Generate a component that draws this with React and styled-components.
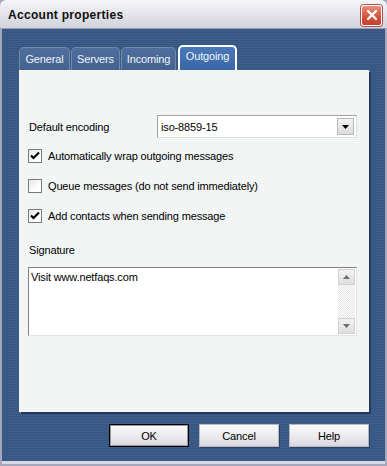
import React from "react";
import styled, { createGlobalStyle } from "styled-components";

const Global = createGlobalStyle`
  html, body { margin: 0; padding: 0; background: #3a5a8a; }
  * { box-sizing: border-box; }
`;

const font = `"Liberation Sans", Arial, sans-serif`;

const Window = styled.div`
  width: 387px;
  height: 466px;
  display: flex;
  flex-direction: column;
  font-family: ${font};
  font-size: 11px;
  letter-spacing: -0.15px;
  color: #000;
  border-left: 2px solid #a6a6bc;
  border-right: 2px solid #a6a6bc;
  border-bottom: 2px solid #a6a6bc;
  background: #a6a6bc;
`;

const TitleBar = styled.div`
  height: 29px;
  flex: none;
  display: flex;
  align-items: center;
  justify-content: space-between;
  padding: 2px 5px 0 8px;
  background: linear-gradient(#f6f6f8 0%, #e6e6ec 45%, #d2d2da 100%);
  border-bottom: 1px solid #9a9aac;
  margin: 0 -2px;
  border-radius: 6px 6px 0 0;
`;

const Title = styled.span`
  font-weight: bold;
  font-size: 12px;
  color: #101010;
  letter-spacing: 0.3px;
`;

const Close = styled.div`
  width: 21px;
  height: 21px;
  border-radius: 3px;
  border: 1px solid #fff;
  box-shadow: 0 0 0 1px #b05050;
  background: linear-gradient(#e8907a, #d0503a 60%, #c84030);
  display: flex;
  align-items: center;
  justify-content: center;
`;

const Body = styled.div`
  flex: 1;
  display: flex;
  flex-direction: column;
  padding: 16px 16px 0 17px;
  background: repeating-linear-gradient(
    #3d5d8d 0px, #3d5d8d 1px, #36557f 1px, #36557f 2px
  );
  border-bottom: 3px solid #d8d8e4;
`;

const Tabs = styled.div`
  display: flex;
  align-items: flex-end;
  gap: 1px;
  height: 25px;
`;

const Tab = styled.div`
  width: ${(p) => p.$w}px;
  height: ${(p) => (p.$active ? "25px" : "23px")};
  padding-top: ${(p) => (p.$active ? "3px" : "5px")};
  margin-left: ${(p) => (p.$active ? "1px" : "0")};
  text-align: center;
  border-radius: 5px 5px 0 0;
  color: #f0f4fa;
  font-size: 11px;
  background: ${(p) =>
    p.$active ? "linear-gradient(#4a78b8, #3a66a4)" : "linear-gradient(#4f6e9c, #43628f)"};
  border: ${(p) => (p.$active ? "2px solid #fafcff" : "1px solid #7088ac")};
  border-bottom: none;
`;

const Panel = styled.div`
  width: 350px;
  height: 342px;
  display: flex;
  flex-direction: column;
  padding: 45px 11px 0 9px;
  background: repeating-linear-gradient(
    #f6f8f8 0px, #f6f8f8 1px, #eff2f2 1px, #eff2f2 2px
  );
  box-shadow: 2px 2px 0 #25395a, 1px 1px 0 #a8b0b8;
`;

const Row = styled.div`
  display: flex;
  align-items: center;
  height: 23px;
`;

const Label = styled.span`
  width: 129px;
  padding-left: 1px;
`;

const Select = styled.div`
  width: 200px;
  height: 23px;
  display: flex;
  align-items: center;
  justify-content: space-between;
  background: #fff;
  border: 1px solid #a0a0a0;
  border-right-color: #e0e0e0;
  border-bottom-color: #e0e0e0;
  padding: 2px 2px 2px 3px;
`;

const DropButton = styled.div`
  width: 17px;
  height: 17px;
  background: linear-gradient(#f4f4f4, #dcdcdc);
  border: 1px solid #b8b8b8;
  display: flex;
  align-items: center;
  justify-content: center;
`;

const CheckRow = styled.label`
  display: flex;
  align-items: center;
  gap: 6px;
  height: 14px;
  margin-top: ${(p) => p.$mt}px;
`;

const Box = styled.span`
  width: 14px;
  height: 14px;
  flex: none;
  background: linear-gradient(135deg, #e6e6e6, #ffffff 70%);
  border: 1px solid #7a7a7a;
  display: flex;
  align-items: center;
  justify-content: center;
`;

const SigLabel = styled.div`
  margin-top: 21px;
  padding-left: 1px;
`;

const TextArea = styled.div`
  margin-top: 11px;
  width: 329px;
  height: 69px;
  display: flex;
  background: #fff;
  border: 1px solid #808080;
  border-right-color: #e4e4e4;
  border-bottom-color: #e4e4e4;
  padding: 1px;
`;

const TextContent = styled.div`
  flex: 1;
  padding: 2px 1px;
  line-height: 13px;
`;

const Scroll = styled.div`
  width: 17px;
  display: flex;
  flex-direction: column;
  justify-content: space-between;
  background-color: #f2f2f2;
  background-image: repeating-conic-gradient(#e8e8e8 0% 25%, #fbfbfb 0% 50%);
  background-size: 2px 2px;
`;

const ScrollBtn = styled.div`
  height: 16px;
  background: linear-gradient(#f2f2f2, #dedede);
  border: 1px solid #d0d0d0;
  display: flex;
  align-items: center;
  justify-content: center;
`;

const Buttons = styled.div`
  display: flex;
  justify-content: flex-end;
  gap: 10px;
  margin-top: 12px;
`;

const Button = styled.div`
  width: 80px;
  height: 23px;
  display: flex;
  align-items: center;
  justify-content: center;
  font-size: 11px;
  background: linear-gradient(#fafafa, #e6e6ea 70%, #d8d8dc);
  border: 1px solid ${(p) => (p.$default ? "#000" : "#b8b8c0")};
  box-shadow: ${(p) =>
    p.$default ? "inset 0 0 0 1px #9a9aa0" : "1px 1px 0 #2c4368"};
`;

const Tri = ({ up }) => (
  <svg width="7" height="4" viewBox="0 0 7 4">
    <path d={up ? "M0 4 L3.5 0 L7 4 Z" : "M0 0 L7 0 L3.5 4 Z"} fill="#6e6e6e" />
  </svg>
);

const Check = () => (
  <svg width="10" height="10" viewBox="0 0 10 10">
    <path d="M1 4.5 L3.5 7 L9 1.5" fill="none" stroke="#000" strokeWidth="2.2" />
  </svg>
);

export default function App() {
  return (
    <>
      <Global />
      <Window>
        <TitleBar>
          <Title>Account properties</Title>
          <Close>
            <svg width="12" height="12" viewBox="0 0 12 12">
              <path d="M2 2 L10 10 M10 2 L2 10" stroke="#fff" strokeWidth="2.4" strokeLinecap="round" />
            </svg>
          </Close>
        </TitleBar>
        <Body>
          <Tabs>
            <Tab $w={51}>General</Tab>
            <Tab $w={49}>Servers</Tab>
            <Tab $w={55}>Incoming</Tab>
            <Tab $w={59} $active>Outgoing</Tab>
          </Tabs>
          <Panel>
            <Row>
              <Label>Default encoding</Label>
              <Select>
                <span>iso-8859-15</span>
                <DropButton>
                  <svg width="7" height="4" viewBox="0 0 7 4">
                    <path d="M0 0 L7 0 L3.5 4 Z" fill="#000" />
                  </svg>
                </DropButton>
              </Select>
            </Row>
            <CheckRow $mt={11}>
              <Box><Check /></Box>
              <span>Automatically wrap outgoing messages</span>
            </CheckRow>
            <CheckRow $mt={16}>
              <Box />
              <span>Queue messages (do not send immediately)</span>
            </CheckRow>
            <CheckRow $mt={16}>
              <Box><Check /></Box>
              <span>Add contacts when sending message</span>
            </CheckRow>
            <SigLabel>Signature</SigLabel>
            <TextArea>
              <TextContent>Visit www.netfaqs.com</TextContent>
              <Scroll>
                <ScrollBtn><Tri up /></ScrollBtn>
                <ScrollBtn><Tri /></ScrollBtn>
              </Scroll>
            </TextArea>
          </Panel>
          <Buttons>
            <Button $default>OK</Button>
            <Button>Cancel</Button>
            <Button>Help</Button>
          </Buttons>
        </Body>
      </Window>
    </>
  );
}
